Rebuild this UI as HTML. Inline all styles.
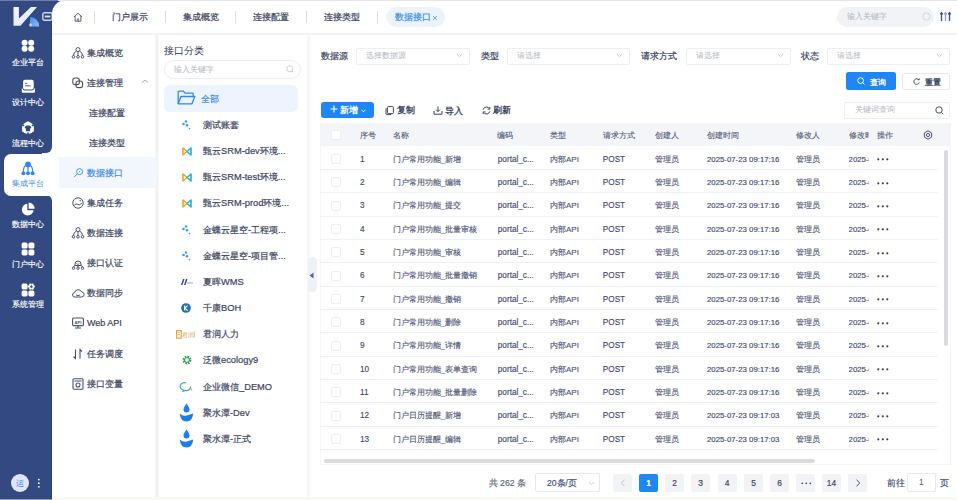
<!DOCTYPE html><html><head><meta charset="utf-8"><style>
*{box-sizing:border-box;margin:0;padding:0}
html,body{width:957px;height:500px;overflow:hidden;background:#fff;font-family:"Liberation Sans",sans-serif;color:#3b4463}
.abs{position:absolute}
svg.i{position:absolute;overflow:visible}
.sitem{position:absolute;left:3px;width:50px;text-align:center;color:#fff;font-size:7.6px;line-height:9px;-webkit-text-stroke:0.15px currentColor}
.tab{position:absolute;top:11px;font-size:9px;line-height:12px;color:#3b4463;-webkit-text-stroke:0.2px currentColor;white-space:nowrap}
.sep{position:absolute;top:11px;width:1px;height:12px;background:#dcdfe6}
.mi{position:absolute;left:87px;font-size:9px;line-height:12px;white-space:nowrap;color:#3b4463;-webkit-text-stroke:0.2px currentColor}
.ci{position:absolute;left:203px;font-size:9.3px;line-height:12px;white-space:nowrap;color:#3b4463;-webkit-text-stroke:0.2px currentColor}
.lbl{position:absolute;font-size:9px;line-height:12px;color:#3b4463;white-space:nowrap;-webkit-text-stroke:0.2px currentColor}
.sel{position:absolute;height:17px;border:1px solid #eceef2;border-radius:2px;background:#fff}
.ph{position:absolute;font-size:7.7px;line-height:10px;color:#b0b4be;white-space:nowrap}
.th{position:absolute;font-size:8px;line-height:11px;color:#4f5778;white-space:nowrap;-webkit-text-stroke:0.1px currentColor}
.td{position:absolute;font-size:8.2px;line-height:11px;color:#3f4a76;white-space:nowrap;-webkit-text-stroke:0.15px currentColor}
.cb{position:absolute;left:331px;width:10px;height:10px;border:1px solid #eceef2;border-radius:2px;background:#fff}
.pg{position:absolute;top:474px;width:19px;height:18px;background:#f2f3f6;border-radius:2px;font-size:8.4px;line-height:18px;text-align:center;color:#3f4668;-webkit-text-stroke:0.2px currentColor}
</style></head><body>
<div class="abs" style="left:0;top:0;width:52px;height:500px;background:#324a81"></div>
<div class="abs" style="left:51px;top:14px;width:1px;height:486px;background:#2a3f6e"></div>
<div class="abs" style="left:42px;top:143px;width:12px;height:62px;background:#fff"></div>
<div class="abs" style="left:40px;top:141px;width:12px;height:12px;background:#324a81;border-bottom-right-radius:6px"></div>
<div class="abs" style="left:40px;top:195px;width:12px;height:12px;background:#324a81;border-top-right-radius:6px"></div>
<div class="abs" style="left:3.5px;top:154px;width:52px;height:41.5px;background:#fff;border-radius:7px 0 0 7px"></div>
<div class="sitem" style="top:57.5px">企业平台</div>
<div class="sitem" style="top:98px">设计中心</div>
<div class="sitem" style="top:138.5px">流程中心</div>
<div class="sitem" style="top:178.5px;color:#3f8eec;-webkit-text-stroke:0">集成平台</div>
<div class="sitem" style="top:219.5px">数据中心</div>
<div class="sitem" style="top:259.5px">门户中心</div>
<div class="sitem" style="top:300px">系统管理</div>
<svg class="i" style="left:21px;top:39px" width="14" height="14" viewBox="0 0 14 14"><circle cx="3.6" cy="3.8" r="3" fill="#fff"/><circle cx="3.6" cy="9.8" r="3" fill="#fff"/><circle cx="10.2" cy="3.8" r="3" fill="#fff"/><circle cx="10.2" cy="9.8" r="3" fill="#fff"/></svg>
<svg class="i" style="left:21px;top:79px" width="15" height="15" viewBox="0 0 15 15"><path d="M0.8 9.4 H14 V12.6 Q14 13.8 12.8 13.8 H2 Q0.8 13.8 0.8 12.6 Z" fill="#fff"/><rect x="1.6" y="0.4" width="11.6" height="11.2" rx="2.4" fill="#324a81"/><rect x="2.1" y="0.8" width="10.6" height="9.6" rx="1.9" fill="#fff"/><rect x="4" y="3.8" width="2" height="0.9" fill="#324a81"/><rect x="4" y="6" width="5.8" height="1.5" fill="#8a95b6"/></svg>
<svg class="i" style="left:21px;top:120.5px" width="14" height="14" viewBox="0 0 14 14"><circle cx="7" cy="7" r="6" fill="#fff"/><circle cx="2.50" cy="4.40" r="0.9" fill="#324a81"/><circle cx="11.50" cy="4.40" r="0.9" fill="#324a81"/><circle cx="7.00" cy="12.20" r="0.9" fill="#324a81"/><path d="M4.3 5.2 L5.9 4.5 H8.1 L9.7 5.2 L10.4 7 L9.1 7.4 V10.2 H4.9 V7.4 L3.6 7 Z" fill="#324a81"/><circle cx="7.00" cy="1.9" r="1.6" fill="#fff"/><circle cx="2.6" cy="9.5" r="1.6" fill="#fff"/><circle cx="11.4" cy="9.5" r="1.6" fill="#fff"/></svg>
<svg class="i" style="left:21px;top:160.5px" width="14" height="15" viewBox="0 0 14 15"><circle cx="7" cy="3.4" r="2.9" fill="#2f86f0"/><path d="M7 6 V10.5 M4.6 4.6 Q2.4 6 2.4 10.5 M9.4 4.6 Q11.6 6 11.6 10.5" stroke="#2f86f0" stroke-width="1.2" fill="none"/><circle cx="2.4" cy="12.2" r="2" fill="#2f86f0"/><circle cx="7" cy="12.2" r="2" fill="#2f86f0"/><circle cx="11.6" cy="12.2" r="2" fill="#2f86f0"/></svg>
<svg class="i" style="left:21px;top:202px" width="15" height="15" viewBox="0 0 15 15"><path d="M6.3 1.8 A5.9 5.9 0 1 0 12.6 8.2 H6.3 Z" fill="#fff"/><path d="M7.6 0.6 A6 6 0 0 1 13.6 6.8 H7.6 Z" fill="#fff"/></svg>
<svg class="i" style="left:21px;top:242px" width="14" height="14" viewBox="0 0 14 14"><rect x="0.6" y="0.6" width="6" height="6" rx="1.6" fill="#fff"/><rect x="0.6" y="7.4" width="6" height="6" rx="1.6" fill="#fff"/><rect x="7.4" y="0.6" width="6" height="6" rx="1.6" fill="#fff"/><rect x="7.4" y="7.4" width="6" height="6" rx="1.6" fill="#fff"/></svg>
<svg class="i" style="left:21px;top:282.5px" width="14" height="14" viewBox="0 0 14 14"><rect x="0.6" y="0.6" width="6" height="6" rx="1.6" fill="#fff"/><rect x="0.6" y="7.4" width="6" height="6" rx="1.6" fill="#fff"/><rect x="7.4" y="7.4" width="6" height="6" rx="1.6" fill="#fff"/><circle cx="12.60" cy="3.60" r="1.25" fill="#fff"/><circle cx="11.50" cy="5.51" r="1.25" fill="#fff"/><circle cx="9.30" cy="5.51" r="1.25" fill="#fff"/><circle cx="8.20" cy="3.60" r="1.25" fill="#fff"/><circle cx="9.30" cy="1.69" r="1.25" fill="#fff"/><circle cx="11.50" cy="1.69" r="1.25" fill="#fff"/><circle cx="10.4" cy="3.6" r="1" fill="#324a81"/></svg>
<div class="abs" style="left:10.7px;top:474.3px;width:18.2px;height:18.2px;border-radius:50%;background:#dfe4f7;color:#3a7ef0;font-size:8.3px;line-height:18.2px;text-align:center">运</div>
<svg class="i" style="left:37px;top:478px" width="4" height="10" viewBox="0 0 4 10"><circle cx="1.8" cy="1.6" r="0.9" fill="#fff"/><circle cx="1.8" cy="5.2" r="0.9" fill="#fff"/><circle cx="1.8" cy="8.8" r="0.9" fill="#fff"/></svg>
<svg class="i" style="left:12px;top:5px" width="30" height="23" viewBox="0 0 30 23"><defs><linearGradient id="lg" x1="0" y1="0" x2="1" y2="1"><stop offset="0" stop-color="#f4f6ff"/><stop offset="1" stop-color="#dfe6fb"/></linearGradient><linearGradient id="bg2" x1="0" y1="0" x2="1" y2="1"><stop offset="0" stop-color="#3d8ff0"/><stop offset="1" stop-color="#8fb9f3"/></linearGradient></defs><path d="M17.6 21.4 L18.3 12 A9.2 9.2 0 0 1 27.2 21.4 Z" fill="url(#bg2)"/><path d="M1.5 2 H6.9 V13.6 L19 2 H25 L8.5 20.7 H1.5 Z" fill="url(#lg)"/><circle cx="18.6" cy="20" r="1.4" fill="#e8d27a"/></svg>
<svg class="i" style="left:41.5px;top:11.5px" width="11" height="9" viewBox="0 0 11 9"><rect x="0.8" y="0.8" width="9.4" height="7.4" rx="1.6" fill="none" stroke="#cdd3f2" stroke-width="1.4"/><rect x="2.8" y="3.6" width="5.6" height="1.8" fill="#dfe3f7"/></svg>
<div class="abs" style="left:52px;top:0;width:16px;height:16px;background:#324a81"></div>
<div class="abs" style="left:52px;top:0;width:905px;height:33px;background:#fff;border-top-left-radius:14px;border-bottom:2px solid #f1f2f5;height:35px"></div>
<div class="abs" style="left:0;top:0;width:957px;height:1px;background:#e4e6ea"></div>
<div class="abs" style="left:0;top:0;width:58px;height:1px;background:#6f7ea6"></div>
<div class="sep" style="left:94px"></div>
<div class="sep" style="left:165px"></div>
<div class="sep" style="left:235px"></div>
<div class="sep" style="left:306px"></div>
<div class="sep" style="left:376.5px"></div>
<svg class="i" style="left:72.9px;top:11.8px" width="10" height="10" viewBox="0 0 10 10"><path d="M0.9 5 L5 1.2 L9.1 5 M2.1 4 V9.2 H7.9 V4" fill="none" stroke="#4a5170" stroke-width="0.9" stroke-linejoin="round"/><path d="M4.3 9.2 V6.8 H5.7 V9.2" fill="none" stroke="#4a5170" stroke-width="0.7"/></svg>
<div class="tab" style="left:111.5px">门户展示</div>
<div class="tab" style="left:182.5px">集成概览</div>
<div class="tab" style="left:252.5px">连接配置</div>
<div class="tab" style="left:323.5px">连接类型</div>
<div class="abs" style="left:386px;top:7px;width:59px;height:20px;border-radius:10px;background:#ebf3fd"></div>
<div class="tab" style="left:394.5px;color:#3d8bee">数据接口</div>
<svg class="i" style="left:431.5px;top:14.5px" width="6" height="6" viewBox="0 0 6 6"><path d="M1 1 L5 5 M5 1 L1 5" stroke="#6aa5f0" stroke-width="0.9"/></svg>
<div class="abs" style="left:837px;top:6.5px;width:97px;height:20px;border-radius:10px;background:#f2f3f7"></div>
<div class="ph" style="left:847px;top:11.5px">输入关键字</div>
<svg class="i" style="left:922px;top:12px" width="9" height="9" viewBox="0 0 9 9"><circle cx="4.5" cy="4.5" r="3.6" fill="none" stroke="#d3d6de" stroke-width="1"/></svg>
<svg class="i" style="left:939.5px;top:11px" width="11" height="11" viewBox="0 0 11 11"><path d="M1.5 2 V10 M0.2 3.4 L1.5 1.6 L2.8 3.4 M9.5 2 V10 M8.2 3.4 L9.5 1.6 L10.8 3.4" fill="none" stroke="#3f5282" stroke-width="1.3"/><path d="M5.5 1.5 V10 M4.2 3.4 L5.5 1.6 L6.8 3.4" fill="none" stroke="#7fa6e6" stroke-width="1.3"/></svg>
<div class="abs" style="left:154.5px;top:34px;width:4px;height:463px;background:#f8f8f9"></div>
<div class="abs" style="left:156px;top:34px;width:1.5px;height:463px;background:#f1f2f4"></div>
<div class="abs" style="left:59px;top:157px;width:96px;height:31px;background:#f2f6fd"></div>
<div class="mi" style="top:46.5px;left:87px">集成概览</div>
<div class="mi" style="top:77px;left:87px">连接管理</div>
<div class="mi" style="top:107px;left:89px">连接配置</div>
<div class="mi" style="top:137px;left:89px">连接类型</div>
<div class="mi" style="top:166.5px;left:87px;color:#3d8bee">数据接口</div>
<div class="mi" style="top:196.5px;left:87px">集成任务</div>
<div class="mi" style="top:226.5px;left:87px">数据连接</div>
<div class="mi" style="top:257px;left:87px">接口认证</div>
<div class="mi" style="top:287px;left:87px">数据同步</div>
<div class="mi" style="top:317px;left:87px">Web API</div>
<div class="mi" style="top:347.5px;left:87px">任务调度</div>
<div class="mi" style="top:377.5px;left:87px">接口变量</div>
<svg class="i" style="left:72px;top:46.5px" width="12" height="12" viewBox="0 0 12 12"><circle cx="6" cy="2.6" r="2" fill="none" stroke="#4a5170" stroke-width="1"/><path d="M4.4 4 Q1.5 5.5 1.5 8.5 M7.6 4 Q10.5 5.5 10.5 8.5 M6 4.6 V8.5" fill="none" stroke="#4a5170" stroke-width="1"/><circle cx="1.5" cy="9.8" r="1.3" fill="none" stroke="#4a5170" stroke-width="1"/><circle cx="6" cy="9.8" r="1.3" fill="none" stroke="#4a5170" stroke-width="1"/><circle cx="10.5" cy="9.8" r="1.3" fill="none" stroke="#4a5170" stroke-width="1"/></svg>
<svg class="i" style="left:72px;top:77px" width="12" height="12" viewBox="0 0 12 12"><rect x="0.8" y="1" width="6.6" height="6.6" rx="2.4" fill="none" stroke="#4a5170" stroke-width="1.1"/><rect x="4" y="4" width="6.6" height="6.6" rx="2.4" fill="none" stroke="#4a5170" stroke-width="1.1"/></svg>
<svg class="i" style="left:141px;top:79.3px" width="8" height="5" viewBox="0 0 8 5"><path d="M1 3.6 L4 1 L7 3.6" fill="none" stroke="#9ca1ae" stroke-width="0.9"/></svg>
<svg class="i" style="left:72px;top:166.5px" width="12" height="12" viewBox="0 0 12 12"><circle cx="7.6" cy="4.6" r="3" fill="none" stroke="#3d8bee" stroke-width="0.95"/><path d="M5.3 6.9 L2 10.2" stroke="#3d8bee" stroke-width="0.95"/><circle cx="7.6" cy="4.6" r="0.6" fill="#3d8bee"/></svg>
<svg class="i" style="left:72px;top:196.5px" width="12" height="12" viewBox="0 0 12 12"><circle cx="6" cy="6" r="5.2" fill="none" stroke="#4a5170" stroke-width="1"/><path d="M2.2 8.4 Q4 6 5.6 7.4 T9.8 6.2" fill="none" stroke="#4a5170" stroke-width="1"/><circle cx="8.2" cy="3.8" r="0.7" fill="#4a5170"/></svg>
<svg class="i" style="left:72px;top:227px" width="12" height="12" viewBox="0 0 12 12"><circle cx="6" cy="2.6" r="2" fill="none" stroke="#4a5170" stroke-width="1"/><path d="M4.4 4 Q1.5 5.5 1.5 8.5 M7.6 4 Q10.5 5.5 10.5 8.5 M6 4.6 V8.5" fill="none" stroke="#4a5170" stroke-width="1"/><circle cx="1.5" cy="9.8" r="1.3" fill="none" stroke="#4a5170" stroke-width="1"/><circle cx="6" cy="9.8" r="1.3" fill="none" stroke="#4a5170" stroke-width="1"/><circle cx="10.5" cy="9.8" r="1.3" fill="none" stroke="#4a5170" stroke-width="1"/></svg>
<svg class="i" style="left:72px;top:257.5px" width="12" height="12" viewBox="0 0 12 12"><path d="M3 6 A3 3 0 0 1 9 6 V7.5 H3 Z" fill="none" stroke="#4a5170" stroke-width="1"/><path d="M3 7.5 Q1.5 8 1.5 9 M9 7.5 Q10.5 8 10.5 9 M6 7.5 V9" fill="none" stroke="#4a5170" stroke-width="1"/><circle cx="1.5" cy="10.2" r="1.2" fill="none" stroke="#4a5170" stroke-width="1"/><circle cx="6" cy="10.2" r="1.2" fill="none" stroke="#4a5170" stroke-width="1"/><circle cx="10.5" cy="10.2" r="1.2" fill="none" stroke="#4a5170" stroke-width="1"/><path d="M4.5 5.5 L6 6.5 L7.5 5.5" fill="none" stroke="#4a5170" stroke-width="0.8"/></svg>
<svg class="i" style="left:72px;top:287px" width="12" height="12" viewBox="0 0 12 12"><path d="M3 10 H9.5 A2.5 2.5 0 0 0 9.8 5 A3.8 3.8 0 0 0 2.6 5.6 A2.2 2.2 0 0 0 3 10 Z" fill="none" stroke="#4a5170" stroke-width="1"/><path d="M4 8 Q6 9.3 8 8" fill="none" stroke="#4a5170" stroke-width="0.9"/></svg>
<svg class="i" style="left:72px;top:317px" width="12" height="12" viewBox="0 0 12 12"><rect x="0.6" y="1" width="10.8" height="7.6" rx="1" fill="none" stroke="#4a5170" stroke-width="1.1"/><path d="M6 8.6 V10.6 M3 11 H9" stroke="#4a5170" stroke-width="1.1"/><text x="6" y="6.6" font-size="4.2" text-anchor="middle" fill="#4a5170" font-family="Liberation Sans" font-weight="bold">API</text></svg>
<svg class="i" style="left:72px;top:347.5px" width="12" height="12" viewBox="0 0 12 12"><path d="M3.5 1.5 V10.5 L1.5 8.5 M8 10.5 V1.5 L10 3.5" fill="none" stroke="#4a5170" stroke-width="1.1"/></svg>
<svg class="i" style="left:72px;top:377.5px" width="12" height="12" viewBox="0 0 12 12"><rect x="1" y="0.8" width="10" height="10.4" rx="1" fill="none" stroke="#4a5170" stroke-width="1.1"/><path d="M2.5 3 H9.5" stroke="#4a5170" stroke-width="1"/><circle cx="6" cy="7" r="2" fill="none" stroke="#4a5170" stroke-width="1.1"/></svg>
<div class="abs" style="left:306.5px;top:34px;width:3px;height:463px;background:#f6f7f9"></div>
<div class="abs" style="left:164px;top:44px;font-size:10.3px;line-height:13px;color:#2f3753">接口分类</div>
<div class="abs" style="left:164px;top:60px;width:137px;height:19px;border:1px solid #eceef2;border-radius:10px"></div>
<div class="ph" style="left:174px;top:65px">输入关键字</div>
<svg class="i" style="left:286px;top:65px" width="8" height="8" viewBox="0 0 8 8"><circle cx="3.8" cy="3.8" r="3" fill="none" stroke="#c3c7d0" stroke-width="0.9"/><path d="M6 6 L7.4 7.4" stroke="#c3c7d0" stroke-width="0.9"/></svg>
<div class="abs" style="left:164px;top:85px;width:134px;height:27px;background:#eef4fd;border-radius:6px"></div>
<svg class="i" style="left:177px;top:90px" width="19" height="16" viewBox="0 0 19 16"><path d="M1.2 13.8 V2 Q1.2 1.2 2 1.2 H6.4 L8 3.2 H15.4 Q16.2 3.2 16.2 4 V6" fill="none" stroke="#2f86f0" stroke-width="1.3"/><path d="M1.2 13.8 L4 6.5 H17.8 L15 13.8 Z" fill="none" stroke="#2f86f0" stroke-width="1.3" stroke-linejoin="round"/></svg>
<div class="ci" style="left:200.5px;top:92.5px;color:#3d8bee;font-size:9.3px">全部</div>
<div class="ci" style="top:119.00px">测试账套</div>
<svg class="i" style="left:182px;top:120.0px" width="9" height="10" viewBox="0 0 9 10"><circle cx="4" cy="1.5" r="1.2" fill="#3aa0e8"/><circle cx="1.5" cy="4" r="1.3" fill="#3aa0e8"/><circle cx="5" cy="5.2" r="1.3" fill="#3aa0e8"/><circle cx="7.5" cy="8.6" r="0.8" fill="#3aa0e8"/></svg>
<div class="ci" style="top:145.15px">甄云SRM-dev环境...</div>
<svg class="i" style="left:181.5px;top:146.65px" width="10" height="9" viewBox="0 0 10 9"><path d="M1 1 L5 4.5 L1 8 Z" fill="none" stroke="#f5a623" stroke-width="1.6" stroke-linejoin="round"/><path d="M9 1 L5 4.5 L9 8 Z" fill="none" stroke="#1fb5d6" stroke-width="1.6" stroke-linejoin="round"/></svg>
<div class="ci" style="top:171.30px">甄云SRM-test环境...</div>
<svg class="i" style="left:181.5px;top:172.8px" width="10" height="9" viewBox="0 0 10 9"><path d="M1 1 L5 4.5 L1 8 Z" fill="none" stroke="#f5a623" stroke-width="1.6" stroke-linejoin="round"/><path d="M9 1 L5 4.5 L9 8 Z" fill="none" stroke="#1fb5d6" stroke-width="1.6" stroke-linejoin="round"/></svg>
<div class="ci" style="top:197.45px">甄云SRM-prod环境...</div>
<svg class="i" style="left:181.5px;top:198.95px" width="10" height="9" viewBox="0 0 10 9"><path d="M1 1 L5 4.5 L1 8 Z" fill="none" stroke="#f5a623" stroke-width="1.6" stroke-linejoin="round"/><path d="M9 1 L5 4.5 L9 8 Z" fill="none" stroke="#1fb5d6" stroke-width="1.6" stroke-linejoin="round"/></svg>
<div class="ci" style="top:223.60px">金蝶云星空-工程项...</div>
<svg class="i" style="left:182px;top:224.6px" width="9" height="10" viewBox="0 0 9 10"><circle cx="4" cy="1.5" r="1.2" fill="#3aa0e8"/><circle cx="1.5" cy="4" r="1.3" fill="#3aa0e8"/><circle cx="5" cy="5.2" r="1.3" fill="#3aa0e8"/><circle cx="7.5" cy="8.6" r="0.8" fill="#3aa0e8"/></svg>
<div class="ci" style="top:249.75px">金蝶云星空-项目管...</div>
<svg class="i" style="left:182px;top:250.75px" width="9" height="10" viewBox="0 0 9 10"><circle cx="4" cy="1.5" r="1.2" fill="#3aa0e8"/><circle cx="1.5" cy="4" r="1.3" fill="#3aa0e8"/><circle cx="5" cy="5.2" r="1.3" fill="#3aa0e8"/><circle cx="7.5" cy="8.6" r="0.8" fill="#3aa0e8"/></svg>
<div class="ci" style="top:275.90px">夏晖WMS</div>
<svg class="i" style="left:179px;top:277.9px" width="15" height="8" viewBox="0 0 15 8"><path d="M2 7 L4 1 H5.5 L3.5 7 Z M5 7 L7 1 H8.5 L6.5 7 Z" fill="#2f4a8a"/><rect x="8" y="4.5" width="6" height="1" fill="#9aa6c8"/></svg>
<div class="ci" style="top:302.05px">千康BOH</div>
<svg class="i" style="left:181px;top:303.04999999999995px" width="10" height="10" viewBox="0 0 10 10"><circle cx="5" cy="5" r="4.8" fill="#1e6fb8"/><path d="M3.6 2.4 V7.6 M6.6 2.6 L3.8 5.2 L6.8 7.6" fill="none" stroke="#fff" stroke-width="1.1"/></svg>
<div class="ci" style="top:328.20px">君润人力</div>
<svg class="i" style="left:176px;top:329.7px" width="20" height="9" viewBox="0 0 20 9"><rect x="0.6" y="0.6" width="4.6" height="7.6" fill="none" stroke="#e39a3f" stroke-width="1.1"/><path d="M2 2.4 H3.8 M2 4.4 H3.8" stroke="#e39a3f" stroke-width="0.8"/><text x="6.2" y="7" font-size="5.6" fill="#e39a3f" font-family="Liberation Sans">君润</text><rect x="18.2" y="1.5" width="0.7" height="6" fill="#e9b07a"/></svg>
<div class="ci" style="top:354.35px">泛微ecology9</div>
<svg class="i" style="left:181.5px;top:355.35px" width="10" height="10" viewBox="0 0 10 10"><circle cx="5" cy="5" r="3.3" fill="none" stroke="#2e9e4f" stroke-width="2.2" stroke-dasharray="1.5 1.1"/><circle cx="5" cy="5" r="2.4" fill="none" stroke="#2e9e4f" stroke-width="1"/></svg>
<div class="ci" style="top:380.50px">企业微信_DEMO</div>
<svg class="i" style="left:180.5px;top:381.5px" width="12" height="10" viewBox="0 0 12 10"><path d="M5.2 1 A4.3 3.7 0 1 0 2.6 8 L2 9.3 L4.4 8.5 A4.3 3.7 0 0 0 9.6 4.6" fill="none" stroke="#3aa0e8" stroke-width="1.2"/><path d="M8 6.5 Q10.5 6.5 11 8.5" fill="none" stroke="#f5a623" stroke-width="1.1"/></svg>
<div class="ci" style="top:406.65px">聚水潭-Dev</div>
<svg class="i" style="left:179px;top:402.65px" width="15" height="19" viewBox="0 0 15 19"><path d="M7.5 0.5 Q4.5 4.5 4.5 6.5 A3 3 0 0 0 10.5 6.5 Q10.5 4.5 7.5 0.5 Z" fill="#1e7de6"/><path d="M0.8 10.5 Q4 13.5 7.5 12.5 Q11 11.5 14.2 10.5 Q13.5 18.5 7.5 18.5 Q1.5 18.5 0.8 10.5 Z" fill="#1e7de6"/></svg>
<div class="ci" style="top:432.80px">聚水潭-正式</div>
<svg class="i" style="left:179px;top:428.79999999999995px" width="15" height="19" viewBox="0 0 15 19"><path d="M7.5 0.5 Q4.5 4.5 4.5 6.5 A3 3 0 0 0 10.5 6.5 Q10.5 4.5 7.5 0.5 Z" fill="#1e7de6"/><path d="M0.8 10.5 Q4 13.5 7.5 12.5 Q11 11.5 14.2 10.5 Q13.5 18.5 7.5 18.5 Q1.5 18.5 0.8 10.5 Z" fill="#1e7de6"/></svg>
<div class="abs" style="left:320px;top:123px;width:631px;height:342px;border:1px solid #f5f6f8;border-top:none"></div>
<div class="abs" style="left:52px;top:497px;width:905px;height:3px;background:#f8f9f5"></div>
<div class="abs" style="left:0;top:499px;width:52px;height:1px;background:#8d9ab8"></div>
<div class="abs" style="left:307.5px;top:257px;width:9px;height:35px;background:#eef1f7;border-radius:5px"></div>
<svg class="i" style="left:309px;top:272px" width="5" height="7" viewBox="0 0 5 7"><path d="M4.5 0.5 L0.5 3.5 L4.5 6.5 Z" fill="#5b6686"/></svg>
<div class="lbl" style="left:321px;top:50px">数据源</div>
<div class="lbl" style="left:480.5px;top:50px">类型</div>
<div class="lbl" style="left:641px;top:50px">请求方式</div>
<div class="lbl" style="left:801px;top:50px">状态</div>
<div class="sel" style="left:356px;top:47.5px;width:114px"></div>
<div class="ph" style="left:366px;top:51px">选择数据源</div>
<svg class="i" style="left:456px;top:53px" width="7" height="5" viewBox="0 0 7 5"><path d="M0.8 1 L3.5 3.6 L6.2 1" fill="none" stroke="#c0c4cc" stroke-width="0.9"/></svg>
<div class="sel" style="left:507px;top:47.5px;width:123px"></div>
<div class="ph" style="left:517px;top:51px">请选择</div>
<svg class="i" style="left:616px;top:53px" width="7" height="5" viewBox="0 0 7 5"><path d="M0.8 1 L3.5 3.6 L6.2 1" fill="none" stroke="#c0c4cc" stroke-width="0.9"/></svg>
<div class="sel" style="left:685.5px;top:47.5px;width:105px"></div>
<div class="ph" style="left:695.5px;top:51px">请选择</div>
<svg class="i" style="left:776.5px;top:53px" width="7" height="5" viewBox="0 0 7 5"><path d="M0.8 1 L3.5 3.6 L6.2 1" fill="none" stroke="#c0c4cc" stroke-width="0.9"/></svg>
<div class="sel" style="left:827px;top:47.5px;width:123px"></div>
<div class="ph" style="left:837px;top:51px">请选择</div>
<svg class="i" style="left:936px;top:53px" width="7" height="5" viewBox="0 0 7 5"><path d="M0.8 1 L3.5 3.6 L6.2 1" fill="none" stroke="#c0c4cc" stroke-width="0.9"/></svg>
<div class="abs" style="left:846px;top:72px;width:49.5px;height:18px;background:#1e87f5;border-radius:2.5px"></div>
<svg class="i" style="left:857px;top:77px" width="8" height="8" viewBox="0 0 8 8"><circle cx="3.6" cy="3.6" r="2.9" fill="none" stroke="#fff" stroke-width="1"/><path d="M5.8 5.8 L7.4 7.4" stroke="#fff" stroke-width="1"/></svg>
<div class="lbl" style="left:870px;top:75.5px;color:#fff;font-size:8.3px;font-weight:bold;-webkit-text-stroke:0">查询</div>
<div class="abs" style="left:902px;top:72.5px;width:48px;height:17.5px;border:1px solid #e6e8ee;border-radius:2px"></div>
<svg class="i" style="left:912.5px;top:77.5px" width="7" height="7" viewBox="0 0 7 7"><path d="M6 2 A2.8 2.8 0 1 0 6.3 4.5" fill="none" stroke="#4a5170" stroke-width="1"/><path d="M4.6 1.6 L6.2 2 L6.4 0.4" fill="none" stroke="#4a5170" stroke-width="0.9"/></svg>
<div class="lbl" style="left:925px;top:75.5px;font-size:8.3px;font-weight:bold;-webkit-text-stroke:0">重置</div>
<div class="abs" style="left:321px;top:101.5px;width:53px;height:16.5px;background:#1e87f5;border-radius:3px"></div>
<svg class="i" style="left:329.5px;top:105px" width="8" height="8" viewBox="0 0 8 8"><path d="M4 0.5 V7.5 M0.5 4 H7.5" stroke="#fff" stroke-width="1.1"/></svg>
<div class="lbl" style="left:340px;top:104px;color:#fff;font-size:8.6px;font-weight:bold;-webkit-text-stroke:0">新增</div>
<svg class="i" style="left:360.5px;top:108.5px" width="5" height="4" viewBox="0 0 5 4"><path d="M0.5 0.8 L2.5 2.8 L4.5 0.8" fill="none" stroke="#fff" stroke-width="0.9"/></svg>
<svg class="i" style="left:385px;top:105.5px" width="9" height="9" viewBox="0 0 9 9"><rect x="2.4" y="0.6" width="6" height="7" rx="1" fill="none" stroke="#3b4463" stroke-width="1"/><path d="M1 2.2 V8 Q1 8.6 1.6 8.6 H6" fill="none" stroke="#3b4463" stroke-width="1"/></svg>
<div class="lbl" style="left:396.5px;top:104px;font-size:8.6px;font-weight:bold;-webkit-text-stroke:0">复制</div>
<svg class="i" style="left:433px;top:105.5px" width="10" height="9" viewBox="0 0 10 9"><path d="M5 0.5 V5.5 M3 3.6 L5 5.6 L7 3.6 M1 5 V8.2 H9 V5" fill="none" stroke="#3b4463" stroke-width="1"/></svg>
<div class="lbl" style="left:444.5px;top:105px;font-size:8.6px;font-weight:bold;-webkit-text-stroke:0">导入</div>
<svg class="i" style="left:481.5px;top:105.5px" width="9" height="9" viewBox="0 0 9 9"><path d="M7.6 3 A3.4 3.4 0 0 0 1.2 3.6 M1.4 6 A3.4 3.4 0 0 0 7.8 5.4" fill="none" stroke="#3b4463" stroke-width="1"/><path d="M7.8 0.8 V3.2 H5.6 M1.2 8.2 V5.8 H3.4" fill="none" stroke="#3b4463" stroke-width="0.9"/></svg>
<div class="lbl" style="left:493px;top:104px;font-size:8.6px;font-weight:bold;-webkit-text-stroke:0">刷新</div>
<div class="abs" style="left:844px;top:101.5px;width:106px;height:17.5px;border:1px solid #eceef2;border-radius:2px"></div>
<div class="ph" style="left:855px;top:105px">关键词查询</div>
<svg class="i" style="left:935px;top:105.5px" width="9" height="9" viewBox="0 0 9 9"><circle cx="4" cy="4" r="3.2" fill="none" stroke="#4a5170" stroke-width="1"/><path d="M6.4 6.4 L8.2 8.2" stroke="#4a5170" stroke-width="1"/></svg>
<div class="abs" style="left:320px;top:123px;width:631px;height:23px;background:#f3f5f9"></div>
<div class="cb" style="top:129.5px"></div>
<div class="th" style="left:360px;top:129.5px">序号</div>
<div class="th" style="left:392.6px;top:129.5px">名称</div>
<div class="th" style="left:497px;top:129.5px">编码</div>
<div class="th" style="left:549.5px;top:129.5px">类型</div>
<div class="th" style="left:602.5px;top:129.5px">请求方式</div>
<div class="th" style="left:654.6px;top:129.5px">创建人</div>
<div class="th" style="left:707px;top:129.5px">创建时间</div>
<div class="th" style="left:795.7px;top:129.5px">修改人</div>
<div class="th" style="left:848.6px;top:129.5px;width:20.5px;overflow:hidden">修改时间</div>
<div class="th" style="left:876.7px;top:129.5px">操作</div>
<svg class="i" style="left:922.5px;top:130px" width="10" height="10" viewBox="0 0 10 10"><path d="M5 0.8 L8.6 2.9 V7.1 L5 9.2 L1.4 7.1 V2.9 Z" fill="none" stroke="#4a5170" stroke-width="1"/><circle cx="5" cy="5" r="1.6" fill="none" stroke="#4a5170" stroke-width="1"/></svg>
<div class="abs" style="left:320px;top:146.80px;width:618px;height:23.33px;border-bottom:1px solid #f0f1f5"></div>
<div class="cb" style="top:154.10px"></div>
<div class="td" style="left:360px;top:153.60px;font-size:8.2px">1</div>
<div class="td" style="left:392.8px;top:153.60px;font-size:7.8px;color:#4f5779">门户常用功能_新增</div>
<div class="td" style="left:497.8px;top:153.60px;font-size:8.2px">portal_c...</div>
<div class="td" style="left:550px;top:153.60px;font-size:8px;color:#4f5779">内部API</div>
<div class="td" style="left:602.8px;top:153.60px;font-size:8.2px">POST</div>
<div class="td" style="left:654.6px;top:153.60px;font-size:8px;color:#4f5779">管理员</div>
<div class="td" style="left:707px;top:153.60px;font-size:7.8px">2025-07-23 09:17:16</div>
<div class="td" style="left:795.7px;top:153.60px;font-size:8px;color:#4f5779">管理员</div>
<div class="td" style="left:848.6px;top:153.60px;width:20.5px;overflow:hidden;font-size:7.8px">2025-07-23</div>
<svg class="i" style="left:876.7px;top:158.20000000000002px" width="12" height="3" viewBox="0 0 12 3"><circle cx="1.3" cy="1.3" r="1.1" fill="#3b4463"/><circle cx="5.8" cy="1.3" r="1.1" fill="#3b4463"/><circle cx="10.3" cy="1.3" r="1.1" fill="#3b4463"/></svg>
<div class="abs" style="left:320px;top:170.13px;width:618px;height:23.33px;border-bottom:1px solid #f0f1f5"></div>
<div class="cb" style="top:177.43px"></div>
<div class="td" style="left:360px;top:176.93px;font-size:8.2px">2</div>
<div class="td" style="left:392.8px;top:176.93px;font-size:7.8px;color:#4f5779">门户常用功能_编辑</div>
<div class="td" style="left:497.8px;top:176.93px;font-size:8.2px">portal_c...</div>
<div class="td" style="left:550px;top:176.93px;font-size:8px;color:#4f5779">内部API</div>
<div class="td" style="left:602.8px;top:176.93px;font-size:8.2px">POST</div>
<div class="td" style="left:654.6px;top:176.93px;font-size:8px;color:#4f5779">管理员</div>
<div class="td" style="left:707px;top:176.93px;font-size:7.8px">2025-07-23 09:17:16</div>
<div class="td" style="left:795.7px;top:176.93px;font-size:8px;color:#4f5779">管理员</div>
<div class="td" style="left:848.6px;top:176.93px;width:20.5px;overflow:hidden;font-size:7.8px">2025-07-23</div>
<svg class="i" style="left:876.7px;top:181.53px" width="12" height="3" viewBox="0 0 12 3"><circle cx="1.3" cy="1.3" r="1.1" fill="#3b4463"/><circle cx="5.8" cy="1.3" r="1.1" fill="#3b4463"/><circle cx="10.3" cy="1.3" r="1.1" fill="#3b4463"/></svg>
<div class="abs" style="left:320px;top:193.46px;width:618px;height:23.33px;border-bottom:1px solid #f0f1f5"></div>
<div class="cb" style="top:200.76px"></div>
<div class="td" style="left:360px;top:200.26px;font-size:8.2px">3</div>
<div class="td" style="left:392.8px;top:200.26px;font-size:7.8px;color:#4f5779">门户常用功能_提交</div>
<div class="td" style="left:497.8px;top:200.26px;font-size:8.2px">portal_c...</div>
<div class="td" style="left:550px;top:200.26px;font-size:8px;color:#4f5779">内部API</div>
<div class="td" style="left:602.8px;top:200.26px;font-size:8.2px">POST</div>
<div class="td" style="left:654.6px;top:200.26px;font-size:8px;color:#4f5779">管理员</div>
<div class="td" style="left:707px;top:200.26px;font-size:7.8px">2025-07-23 09:17:16</div>
<div class="td" style="left:795.7px;top:200.26px;font-size:8px;color:#4f5779">管理员</div>
<div class="td" style="left:848.6px;top:200.26px;width:20.5px;overflow:hidden;font-size:7.8px">2025-07-23</div>
<svg class="i" style="left:876.7px;top:204.86px" width="12" height="3" viewBox="0 0 12 3"><circle cx="1.3" cy="1.3" r="1.1" fill="#3b4463"/><circle cx="5.8" cy="1.3" r="1.1" fill="#3b4463"/><circle cx="10.3" cy="1.3" r="1.1" fill="#3b4463"/></svg>
<div class="abs" style="left:320px;top:216.79px;width:618px;height:23.33px;border-bottom:1px solid #f0f1f5"></div>
<div class="cb" style="top:224.09px"></div>
<div class="td" style="left:360px;top:223.59px;font-size:8.2px">4</div>
<div class="td" style="left:392.8px;top:223.59px;font-size:7.8px;color:#4f5779">门户常用功能_批量审核</div>
<div class="td" style="left:497.8px;top:223.59px;font-size:8.2px">portal_c...</div>
<div class="td" style="left:550px;top:223.59px;font-size:8px;color:#4f5779">内部API</div>
<div class="td" style="left:602.8px;top:223.59px;font-size:8.2px">POST</div>
<div class="td" style="left:654.6px;top:223.59px;font-size:8px;color:#4f5779">管理员</div>
<div class="td" style="left:707px;top:223.59px;font-size:7.8px">2025-07-23 09:17:16</div>
<div class="td" style="left:795.7px;top:223.59px;font-size:8px;color:#4f5779">管理员</div>
<div class="td" style="left:848.6px;top:223.59px;width:20.5px;overflow:hidden;font-size:7.8px">2025-07-23</div>
<svg class="i" style="left:876.7px;top:228.19000000000003px" width="12" height="3" viewBox="0 0 12 3"><circle cx="1.3" cy="1.3" r="1.1" fill="#3b4463"/><circle cx="5.8" cy="1.3" r="1.1" fill="#3b4463"/><circle cx="10.3" cy="1.3" r="1.1" fill="#3b4463"/></svg>
<div class="abs" style="left:320px;top:240.12px;width:618px;height:23.33px;border-bottom:1px solid #f0f1f5"></div>
<div class="cb" style="top:247.42px"></div>
<div class="td" style="left:360px;top:246.92px;font-size:8.2px">5</div>
<div class="td" style="left:392.8px;top:246.92px;font-size:7.8px;color:#4f5779">门户常用功能_审核</div>
<div class="td" style="left:497.8px;top:246.92px;font-size:8.2px">portal_c...</div>
<div class="td" style="left:550px;top:246.92px;font-size:8px;color:#4f5779">内部API</div>
<div class="td" style="left:602.8px;top:246.92px;font-size:8.2px">POST</div>
<div class="td" style="left:654.6px;top:246.92px;font-size:8px;color:#4f5779">管理员</div>
<div class="td" style="left:707px;top:246.92px;font-size:7.8px">2025-07-23 09:17:16</div>
<div class="td" style="left:795.7px;top:246.92px;font-size:8px;color:#4f5779">管理员</div>
<div class="td" style="left:848.6px;top:246.92px;width:20.5px;overflow:hidden;font-size:7.8px">2025-07-23</div>
<svg class="i" style="left:876.7px;top:251.52px" width="12" height="3" viewBox="0 0 12 3"><circle cx="1.3" cy="1.3" r="1.1" fill="#3b4463"/><circle cx="5.8" cy="1.3" r="1.1" fill="#3b4463"/><circle cx="10.3" cy="1.3" r="1.1" fill="#3b4463"/></svg>
<div class="abs" style="left:320px;top:263.45px;width:618px;height:23.33px;border-bottom:1px solid #f0f1f5"></div>
<div class="cb" style="top:270.75px"></div>
<div class="td" style="left:360px;top:270.25px;font-size:8.2px">6</div>
<div class="td" style="left:392.8px;top:270.25px;font-size:7.8px;color:#4f5779">门户常用功能_批量撤销</div>
<div class="td" style="left:497.8px;top:270.25px;font-size:8.2px">portal_c...</div>
<div class="td" style="left:550px;top:270.25px;font-size:8px;color:#4f5779">内部API</div>
<div class="td" style="left:602.8px;top:270.25px;font-size:8.2px">POST</div>
<div class="td" style="left:654.6px;top:270.25px;font-size:8px;color:#4f5779">管理员</div>
<div class="td" style="left:707px;top:270.25px;font-size:7.8px">2025-07-23 09:17:16</div>
<div class="td" style="left:795.7px;top:270.25px;font-size:8px;color:#4f5779">管理员</div>
<div class="td" style="left:848.6px;top:270.25px;width:20.5px;overflow:hidden;font-size:7.8px">2025-07-23</div>
<svg class="i" style="left:876.7px;top:274.85px" width="12" height="3" viewBox="0 0 12 3"><circle cx="1.3" cy="1.3" r="1.1" fill="#3b4463"/><circle cx="5.8" cy="1.3" r="1.1" fill="#3b4463"/><circle cx="10.3" cy="1.3" r="1.1" fill="#3b4463"/></svg>
<div class="abs" style="left:320px;top:286.78px;width:618px;height:23.33px;border-bottom:1px solid #f0f1f5"></div>
<div class="cb" style="top:294.08px"></div>
<div class="td" style="left:360px;top:293.58px;font-size:8.2px">7</div>
<div class="td" style="left:392.8px;top:293.58px;font-size:7.8px;color:#4f5779">门户常用功能_撤销</div>
<div class="td" style="left:497.8px;top:293.58px;font-size:8.2px">portal_c...</div>
<div class="td" style="left:550px;top:293.58px;font-size:8px;color:#4f5779">内部API</div>
<div class="td" style="left:602.8px;top:293.58px;font-size:8.2px">POST</div>
<div class="td" style="left:654.6px;top:293.58px;font-size:8px;color:#4f5779">管理员</div>
<div class="td" style="left:707px;top:293.58px;font-size:7.8px">2025-07-23 09:17:16</div>
<div class="td" style="left:795.7px;top:293.58px;font-size:8px;color:#4f5779">管理员</div>
<div class="td" style="left:848.6px;top:293.58px;width:20.5px;overflow:hidden;font-size:7.8px">2025-07-23</div>
<svg class="i" style="left:876.7px;top:298.18px" width="12" height="3" viewBox="0 0 12 3"><circle cx="1.3" cy="1.3" r="1.1" fill="#3b4463"/><circle cx="5.8" cy="1.3" r="1.1" fill="#3b4463"/><circle cx="10.3" cy="1.3" r="1.1" fill="#3b4463"/></svg>
<div class="abs" style="left:320px;top:310.11px;width:618px;height:23.33px;border-bottom:1px solid #f0f1f5"></div>
<div class="cb" style="top:317.41px"></div>
<div class="td" style="left:360px;top:316.91px;font-size:8.2px">8</div>
<div class="td" style="left:392.8px;top:316.91px;font-size:7.8px;color:#4f5779">门户常用功能_删除</div>
<div class="td" style="left:497.8px;top:316.91px;font-size:8.2px">portal_c...</div>
<div class="td" style="left:550px;top:316.91px;font-size:8px;color:#4f5779">内部API</div>
<div class="td" style="left:602.8px;top:316.91px;font-size:8.2px">POST</div>
<div class="td" style="left:654.6px;top:316.91px;font-size:8px;color:#4f5779">管理员</div>
<div class="td" style="left:707px;top:316.91px;font-size:7.8px">2025-07-23 09:17:16</div>
<div class="td" style="left:795.7px;top:316.91px;font-size:8px;color:#4f5779">管理员</div>
<div class="td" style="left:848.6px;top:316.91px;width:20.5px;overflow:hidden;font-size:7.8px">2025-07-23</div>
<svg class="i" style="left:876.7px;top:321.51000000000005px" width="12" height="3" viewBox="0 0 12 3"><circle cx="1.3" cy="1.3" r="1.1" fill="#3b4463"/><circle cx="5.8" cy="1.3" r="1.1" fill="#3b4463"/><circle cx="10.3" cy="1.3" r="1.1" fill="#3b4463"/></svg>
<div class="abs" style="left:320px;top:333.44px;width:618px;height:23.33px;border-bottom:1px solid #f0f1f5"></div>
<div class="cb" style="top:340.74px"></div>
<div class="td" style="left:360px;top:340.24px;font-size:8.2px">9</div>
<div class="td" style="left:392.8px;top:340.24px;font-size:7.8px;color:#4f5779">门户常用功能_详情</div>
<div class="td" style="left:497.8px;top:340.24px;font-size:8.2px">portal_c...</div>
<div class="td" style="left:550px;top:340.24px;font-size:8px;color:#4f5779">内部API</div>
<div class="td" style="left:602.8px;top:340.24px;font-size:8.2px">POST</div>
<div class="td" style="left:654.6px;top:340.24px;font-size:8px;color:#4f5779">管理员</div>
<div class="td" style="left:707px;top:340.24px;font-size:7.8px">2025-07-23 09:17:16</div>
<div class="td" style="left:795.7px;top:340.24px;font-size:8px;color:#4f5779">管理员</div>
<div class="td" style="left:848.6px;top:340.24px;width:20.5px;overflow:hidden;font-size:7.8px">2025-07-23</div>
<svg class="i" style="left:876.7px;top:344.84000000000003px" width="12" height="3" viewBox="0 0 12 3"><circle cx="1.3" cy="1.3" r="1.1" fill="#3b4463"/><circle cx="5.8" cy="1.3" r="1.1" fill="#3b4463"/><circle cx="10.3" cy="1.3" r="1.1" fill="#3b4463"/></svg>
<div class="abs" style="left:320px;top:356.77px;width:618px;height:23.33px;border-bottom:1px solid #f0f1f5"></div>
<div class="cb" style="top:364.07px"></div>
<div class="td" style="left:360px;top:363.57px;font-size:8.2px">10</div>
<div class="td" style="left:392.8px;top:363.57px;font-size:7.8px;color:#4f5779">门户常用功能_表单查询</div>
<div class="td" style="left:497.8px;top:363.57px;font-size:8.2px">portal_c...</div>
<div class="td" style="left:550px;top:363.57px;font-size:8px;color:#4f5779">内部API</div>
<div class="td" style="left:602.8px;top:363.57px;font-size:8.2px">POST</div>
<div class="td" style="left:654.6px;top:363.57px;font-size:8px;color:#4f5779">管理员</div>
<div class="td" style="left:707px;top:363.57px;font-size:7.8px">2025-07-23 09:17:16</div>
<div class="td" style="left:795.7px;top:363.57px;font-size:8px;color:#4f5779">管理员</div>
<div class="td" style="left:848.6px;top:363.57px;width:20.5px;overflow:hidden;font-size:7.8px">2025-07-23</div>
<svg class="i" style="left:876.7px;top:368.17px" width="12" height="3" viewBox="0 0 12 3"><circle cx="1.3" cy="1.3" r="1.1" fill="#3b4463"/><circle cx="5.8" cy="1.3" r="1.1" fill="#3b4463"/><circle cx="10.3" cy="1.3" r="1.1" fill="#3b4463"/></svg>
<div class="abs" style="left:320px;top:380.10px;width:618px;height:23.33px;border-bottom:1px solid #f0f1f5"></div>
<div class="cb" style="top:387.40px"></div>
<div class="td" style="left:360px;top:386.90px;font-size:8.2px">11</div>
<div class="td" style="left:392.8px;top:386.90px;font-size:7.8px;color:#4f5779">门户常用功能_批量删除</div>
<div class="td" style="left:497.8px;top:386.90px;font-size:8.2px">portal_c...</div>
<div class="td" style="left:550px;top:386.90px;font-size:8px;color:#4f5779">内部API</div>
<div class="td" style="left:602.8px;top:386.90px;font-size:8.2px">POST</div>
<div class="td" style="left:654.6px;top:386.90px;font-size:8px;color:#4f5779">管理员</div>
<div class="td" style="left:707px;top:386.90px;font-size:7.8px">2025-07-23 09:17:16</div>
<div class="td" style="left:795.7px;top:386.90px;font-size:8px;color:#4f5779">管理员</div>
<div class="td" style="left:848.6px;top:386.90px;width:20.5px;overflow:hidden;font-size:7.8px">2025-07-23</div>
<svg class="i" style="left:876.7px;top:391.50000000000006px" width="12" height="3" viewBox="0 0 12 3"><circle cx="1.3" cy="1.3" r="1.1" fill="#3b4463"/><circle cx="5.8" cy="1.3" r="1.1" fill="#3b4463"/><circle cx="10.3" cy="1.3" r="1.1" fill="#3b4463"/></svg>
<div class="abs" style="left:320px;top:403.43px;width:618px;height:23.33px;border-bottom:1px solid #f0f1f5"></div>
<div class="cb" style="top:410.73px"></div>
<div class="td" style="left:360px;top:410.23px;font-size:8.2px">12</div>
<div class="td" style="left:392.8px;top:410.23px;font-size:7.8px;color:#4f5779">门户日历提醒_新增</div>
<div class="td" style="left:497.8px;top:410.23px;font-size:8.2px">portal_c...</div>
<div class="td" style="left:550px;top:410.23px;font-size:8px;color:#4f5779">内部API</div>
<div class="td" style="left:602.8px;top:410.23px;font-size:8.2px">POST</div>
<div class="td" style="left:654.6px;top:410.23px;font-size:8px;color:#4f5779">管理员</div>
<div class="td" style="left:707px;top:410.23px;font-size:7.8px">2025-07-23 09:17:03</div>
<div class="td" style="left:795.7px;top:410.23px;font-size:8px;color:#4f5779">管理员</div>
<div class="td" style="left:848.6px;top:410.23px;width:20.5px;overflow:hidden;font-size:7.8px">2025-07-23</div>
<svg class="i" style="left:876.7px;top:414.83000000000004px" width="12" height="3" viewBox="0 0 12 3"><circle cx="1.3" cy="1.3" r="1.1" fill="#3b4463"/><circle cx="5.8" cy="1.3" r="1.1" fill="#3b4463"/><circle cx="10.3" cy="1.3" r="1.1" fill="#3b4463"/></svg>
<div class="abs" style="left:320px;top:426.76px;width:618px;height:23.33px;border-bottom:1px solid #f0f1f5"></div>
<div class="cb" style="top:434.06px"></div>
<div class="td" style="left:360px;top:433.56px;font-size:8.2px">13</div>
<div class="td" style="left:392.8px;top:433.56px;font-size:7.8px;color:#4f5779">门户日历提醒_编辑</div>
<div class="td" style="left:497.8px;top:433.56px;font-size:8.2px">portal_c...</div>
<div class="td" style="left:550px;top:433.56px;font-size:8px;color:#4f5779">内部API</div>
<div class="td" style="left:602.8px;top:433.56px;font-size:8.2px">POST</div>
<div class="td" style="left:654.6px;top:433.56px;font-size:8px;color:#4f5779">管理员</div>
<div class="td" style="left:707px;top:433.56px;font-size:7.8px">2025-07-23 09:17:03</div>
<div class="td" style="left:795.7px;top:433.56px;font-size:8px;color:#4f5779">管理员</div>
<div class="td" style="left:848.6px;top:433.56px;width:20.5px;overflow:hidden;font-size:7.8px">2025-07-23</div>
<svg class="i" style="left:876.7px;top:438.16px" width="12" height="3" viewBox="0 0 12 3"><circle cx="1.3" cy="1.3" r="1.1" fill="#3b4463"/><circle cx="5.8" cy="1.3" r="1.1" fill="#3b4463"/><circle cx="10.3" cy="1.3" r="1.1" fill="#3b4463"/></svg>
<div class="abs" style="left:324px;top:458.5px;width:491px;height:4px;background:#d9dbdf;border-radius:2px"></div>
<div class="abs" style="left:943.5px;top:150px;width:4.5px;height:196px;background:#d9dbdf;border-radius:2px"></div>
<div class="td" style="left:488.6px;top:477.5px;font-size:8.8px;color:#60667a">共 262 条</div>
<div class="abs" style="left:535px;top:473px;width:65px;height:19px;border:1px solid #e6e8ee;border-radius:2px"></div>
<div class="td" style="left:547px;top:477.5px;font-size:8.6px">20条/页</div>
<svg class="i" style="left:587.5px;top:481px" width="7" height="5" viewBox="0 0 7 5"><path d="M0.8 1 L3.5 3.6 L6.2 1" fill="none" stroke="#c0c4cc" stroke-width="0.9"/></svg>
<div class="pg" style="left:613px"></div>
<div class="pg" style="left:639px;background:#1e87f5;color:#fff;font-weight:bold">1</div>
<div class="pg" style="left:665px">2</div>
<div class="pg" style="left:691px">3</div>
<div class="pg" style="left:717.5px">4</div>
<div class="pg" style="left:744px">5</div>
<div class="pg" style="left:770px">6</div>
<div class="pg" style="left:796px"></div>
<div class="pg" style="left:822px">14</div>
<div class="pg" style="left:848px"></div>
<svg class="i" style="left:800.5px;top:482px" width="11" height="3" viewBox="0 0 11 3"><circle cx="1.3" cy="1.3" r="0.9" fill="#4a5170"/><circle cx="5.3" cy="1.3" r="0.9" fill="#4a5170"/><circle cx="9.3" cy="1.3" r="0.9" fill="#4a5170"/></svg>
<svg class="i" style="left:619.5px;top:479px" width="6" height="8" viewBox="0 0 6 8"><path d="M4.5 0.8 L1.2 4 L4.5 7.2" fill="none" stroke="#c0c4cc" stroke-width="1"/></svg>
<svg class="i" style="left:854.5px;top:479px" width="6" height="8" viewBox="0 0 6 8"><path d="M1.5 0.8 L4.8 4 L1.5 7.2" fill="none" stroke="#4a5170" stroke-width="1"/></svg>
<div class="td" style="left:886.6px;top:477.5px;font-size:8.8px">前往</div>
<div class="abs" style="left:906.7px;top:473px;width:29px;height:19px;border:1px solid #e6e8ee;border-radius:2px;font-size:8.2px;line-height:17px;text-align:center;color:#4a5170">1</div>
<div class="td" style="left:939.6px;top:477.5px;font-size:8.8px">页</div>
</body></html>
